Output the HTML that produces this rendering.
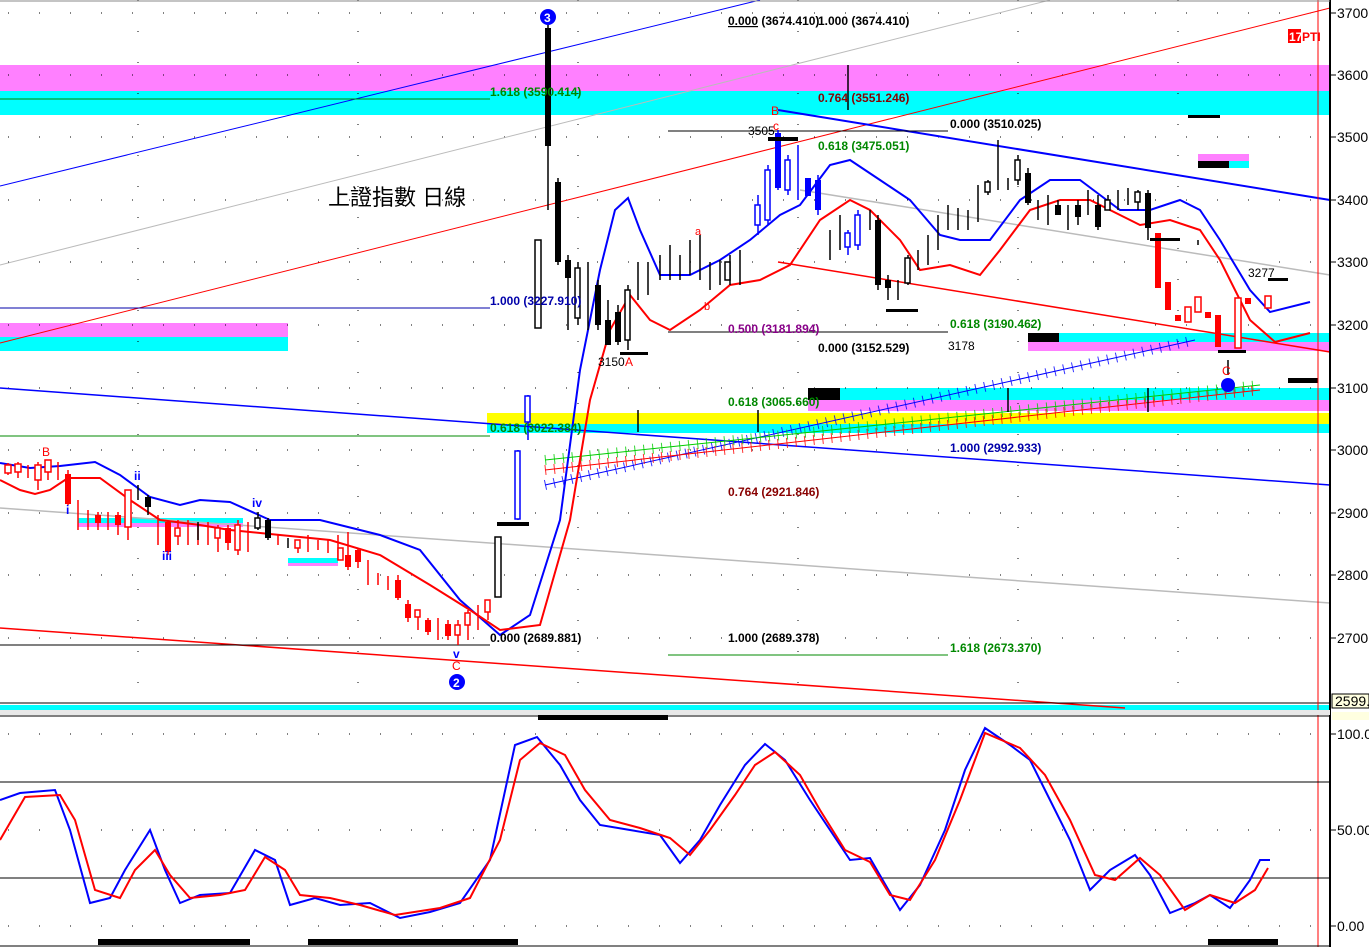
<!DOCTYPE html>
<html><head><meta charset="utf-8"><style>
html,body{margin:0;padding:0;background:#fff;width:1369px;height:947px;overflow:hidden}
svg{display:block}
text{font-family:"Liberation Sans",sans-serif;font-weight:bold;font-size:12px}
.ax{font-family:"Liberation Sans",sans-serif;font-weight:normal;font-size:14px;fill:#000}
</style></head><body>
<svg width="1369" height="947" viewBox="0 0 1369 947" xmlns="http://www.w3.org/2000/svg">
<rect width="1369" height="947" fill="#fff"/>
<rect x="0" y="65" width="1330" height="26" fill="#ff80ff"/>
<rect x="0" y="91" width="1330" height="24" fill="#00ffff"/>
<rect x="0" y="323" width="288" height="14" fill="#ff80ff"/>
<rect x="0" y="337" width="288" height="14" fill="#00ffff"/>
<rect x="487" y="413" width="843" height="11" fill="#ffff00"/>
<rect x="487" y="424" width="843" height="9" fill="#00ffff"/>
<rect x="808" y="388" width="522" height="12" fill="#00ffff"/>
<rect x="808" y="400" width="522" height="11" fill="#ff80ff"/>
<rect x="808" y="388" width="32" height="12" fill="#000"/>
<rect x="1028" y="333" width="302" height="9" fill="#00ffff"/>
<rect x="1028" y="342" width="302" height="9" fill="#ff80ff"/>
<rect x="1028" y="333" width="31" height="9" fill="#000"/>
<rect x="1198" y="154" width="51" height="7" fill="#ff80ff"/>
<rect x="1198" y="161" width="31" height="7" fill="#000"/>
<rect x="1229" y="161" width="20" height="7" fill="#00ffff"/>
<rect x="1288" y="378" width="30" height="5" fill="#000"/>
<rect x="0" y="705" width="1330" height="5" fill="#00ffff"/>
<rect x="78" y="518" width="165" height="5" fill="#00ffff"/><rect x="78" y="523" width="165" height="4" fill="#ff80ff"/>
<rect x="288" y="558" width="50" height="5" fill="#00ffff"/><rect x="288" y="563" width="50" height="3" fill="#ff80ff"/>
<g stroke="#000" stroke-width="1" stroke-dasharray="1 30" fill="none">
<path d="M8 13H1320M8 75H1320M8 137H1320M8 200H1320M8 262H1320M8 325H1320M8 388H1320M8 450H1320M8 513H1320M8 575H1320M8 638H1320M8 734H1320M8 830H1320M8 926H1320"/>
</g>
<g stroke="#000" stroke-dasharray="1 30"><path d="M138 0V700M358 0V700M578 0V700M798 0V700M1018 0V700M1178 0V700"/></g>
<g fill="none">
<path d="M0 186L760 0" stroke="#00f"/>
<path d="M0 265L1050 0" stroke="#bbb"/>
<path d="M0 343L1330 8" stroke="#f00"/>
<path d="M0 388L1330 485" stroke="#00f" stroke-width="1.5"/>
<path d="M778 110L1330 200" stroke="#00f" stroke-width="2"/>
<path d="M778 262L1330 352" stroke="#f00" stroke-width="1.5"/>
<path d="M800 190L1330 275" stroke="#bbb" stroke-width="1.5"/>
<path d="M0 508L1330 603" stroke="#bbb" stroke-width="1.5"/>
<path d="M0 628L1125 708" stroke="#f00" stroke-width="1.5"/>
<path d="M0 645H490" stroke="#000"/>
<path d="M0 308H490" stroke="#00a"/>
<path d="M0 436H490" stroke="#080"/>
<path d="M0 99H490" stroke="#080"/>
<path d="M668 131H948" stroke="#000"/>
<path d="M668 332H948" stroke="#000"/>
<path d="M668 655H948" stroke="#080"/>
<path d="M0 703H1330" stroke="#000"/>
<path d="M1318 0V947" stroke="#f00"/>
<path d="M1330 0V947" stroke="#000" stroke-width="2"/>
</g>
<g fill="none" stroke-width="1">
<path d="M545 485L1195 340" stroke="#00f"/><path d="M545 485L1195 340" stroke="#00f" stroke-width="10" stroke-dasharray="1 8" opacity=".8"/>
<path d="M545 460L1260 385" stroke="#0c0"/><path d="M545 460L1260 385" stroke="#0c0" stroke-width="10" stroke-dasharray="1 8" opacity=".8"/>
<path d="M545 470L1260 390" stroke="#f00"/><path d="M545 470L1260 390" stroke="#f00" stroke-width="10" stroke-dasharray="1 8" opacity=".8"/>
</g>
<polyline fill="none" stroke="#00f" stroke-width="2" points="0,463 30,468 60,466 95,462 120,475 150,497 180,505 200,500 230,502 270,520 320,520 380,535 420,550 460,600 500,635 530,615 560,520 580,370 600,270 615,210 628,198 640,230 660,275 690,275 720,260 750,240 780,215 800,205 830,165 850,160 880,180 910,200 940,235 960,240 990,240 1020,200 1050,180 1080,180 1100,195 1120,210 1150,210 1180,200 1200,210 1220,240 1250,290 1270,312 1310,302"/>
<polyline fill="none" stroke="#f00" stroke-width="2" points="0,480 20,490 35,494 50,490 68,478 100,478 130,500 160,520 200,525 230,530 280,535 330,540 380,555 430,585 470,610 500,630 540,625 570,520 590,400 610,330 630,295 650,320 670,330 700,310 730,285 760,280 790,265 820,220 850,200 870,210 900,240 920,270 950,265 980,275 1000,250 1030,210 1060,200 1090,200 1110,210 1140,225 1170,220 1200,230 1220,260 1250,320 1275,342 1310,333"/>
<g stroke-width="1.5">
<g stroke="#f00" fill="#f00">
<path d="M8 463V475M18 462V478M28 465V478M38 462V490M48 460V480M58 462V480M68 470V505M78 500V530M88 510V530M98 512V530M108 512V530M118 512V535M128 495V540M158 515V545M168 520V555M178 520V545M188 520V545M198 525V545M208 522V545M218 525V552M228 525V550M238 520V555M248 522V552M278 535V545M298 540V553M308 535V552M318 540V550M328 540V553M338 535V560M348 532V570M358 548V568M368 560V585M378 573V585M388 576V590M398 575V600M408 600V622M418 610V630M428 618V635M438 618V640M448 620V640M458 620V645M468 610V640M478 605V630M488 600V620"/>
</g>
<g fill="#f00" stroke="none">
<rect x="65" y="474" width="6" height="30"/><rect x="95" y="515" width="6" height="8"/><rect x="115" y="515" width="6" height="10"/><rect x="165" y="522" width="6" height="30"/><rect x="225" y="528" width="6" height="15"/><rect x="345" y="555" width="6" height="12"/><rect x="355" y="550" width="6" height="12"/><rect x="395" y="580" width="6" height="18"/><rect x="405" y="604" width="6" height="14"/><rect x="425" y="620" width="6" height="12"/><rect x="445" y="624" width="6" height="12"/><rect x="1155" y="233" width="6" height="55"/><rect x="1165" y="282" width="6" height="28"/><rect x="1215" y="315" width="6" height="32"/><rect x="1245" y="298" width="6" height="6"/><rect x="1175" y="315" width="6" height="6"/><rect x="1205" y="312" width="6" height="6"/></g>
<g fill="#fff" stroke="#f00">
<rect x="5" y="465" width="6" height="8"/><rect x="15" y="464" width="6" height="8"/><rect x="35" y="465" width="6" height="15"/><rect x="45" y="460" width="6" height="12"/><rect x="125" y="490" width="6" height="37"/><rect x="175" y="528" width="5" height="8"/><rect x="215" y="528" width="5" height="10"/><rect x="235" y="525" width="5" height="25"/><rect x="295" y="540" width="5" height="8"/><rect x="338" y="548" width="5" height="12"/><rect x="415" y="610" width="5" height="7"/><rect x="455" y="625" width="5" height="10"/><rect x="465" y="613" width="5" height="12"/><rect x="485" y="600" width="5" height="12"/><rect x="1185" y="307" width="6" height="15"/><rect x="1195" y="297" width="6" height="15"/><rect x="1235" y="298" width="6" height="50"/><rect x="1265" y="296" width="6" height="12"/></g>
<g stroke="#000" fill="#000">
<path d="M138 485V500M148 495V515M198 522V540M258 512V530M268 518V540M288 538V548M548 20V210M558 178V265M568 255V330M578 262V325M588 262V330M598 280V330M608 300V345M618 305V345M628 285V350M638 262V300M648 262V295M660 255V280M670 245V280M680 255V280M690 240V275M700 235V280M710 262V290M720 260V285M730 255V285M740 250V285M830 230V260M840 215V250M870 210V230M878 215V290M888 275V300M898 280V300M908 255V285M918 250V270M928 235V265M938 215V250M948 205V230M958 208V230M968 210V230M978 185V222M988 180V195M998 140V190M1008 178V190M1018 155V185M1028 168V205M1038 200V220M1048 195V225M1058 200V215M1068 205V230M1078 200V225M1088 190V215M1098 195V230M1108 195V210M1118 190V210M1128 188V205M1138 190V210M1148 190V240M1198 240V245M1228 360V375M1008 388V412M638 410V432M758 410V432M1148 388V412M848 65V110"/></g>
<g fill="#000" stroke="none"><rect x="545" y="28" width="6" height="118"/><rect x="555" y="182" width="6" height="80"/><rect x="565" y="260" width="6" height="18"/><rect x="595" y="285" width="6" height="40"/><rect x="605" y="320" width="6" height="25"/><rect x="615" y="312" width="6" height="30"/><rect x="875" y="220" width="6" height="65"/><rect x="885" y="280" width="6" height="8"/><rect x="1145" y="193" width="6" height="35"/><rect x="1025" y="173" width="6" height="30"/><rect x="145" y="497" width="6" height="10"/><rect x="265" y="520" width="6" height="18"/><rect x="1055" y="205" width="6" height="10"/><rect x="1075" y="205" width="6" height="12"/><rect x="1095" y="205" width="6" height="22"/></g>
<g fill="#fff" stroke="#000"><rect x="535" y="240" width="6" height="88"/><rect x="575" y="268" width="5" height="50"/><rect x="625" y="290" width="5" height="50"/><rect x="255" y="518" width="5" height="10"/><rect x="985" y="182" width="5" height="10"/><rect x="1015" y="160" width="5" height="20"/><rect x="495" y="537" width="6" height="60"/><rect x="905" y="258" width="5" height="25"/><rect x="1105" y="200" width="5" height="10"/><rect x="1135" y="192" width="5" height="10"/><rect x="725" y="262" width="5" height="18"/></g>
<g stroke="#00f" fill="#00f"><path d="M528 395V440M518 450V520M778 130V190M818 175V215M758 195V235M788 155V195M798 145V200M768 165V225M848 230V255M858 210V250"/></g>
<g fill="#fff" stroke="#00f"><rect x="525" y="396" width="5" height="26"/><rect x="515" y="451" width="5" height="68"/><rect x="765" y="170" width="5" height="50"/><rect x="785" y="160" width="5" height="30"/><rect x="845" y="233" width="5" height="14"/><rect x="855" y="215" width="5" height="30"/><rect x="755" y="205" width="5" height="20"/></g>
<g fill="#00f" stroke="none"><rect x="775" y="133" width="6" height="55"/><rect x="815" y="180" width="6" height="30"/><rect x="805" y="178" width="6" height="18"/></g>
</g>
<g fill="#000"><rect x="497" y="522" width="32" height="4"/><rect x="886" y="309" width="32" height="3"/><rect x="1218" y="350" width="28" height="3"/><rect x="1268" y="278" width="20" height="3"/><rect x="768" y="137" width="30" height="4"/><rect x="1150" y="238" width="30" height="3"/><rect x="1188" y="115" width="32" height="3"/><rect x="620" y="352" width="28" height="3"/><rect x="538" y="714" width="130" height="6"/><rect x="98" y="939" width="152" height="6"/><rect x="308" y="939" width="210" height="6"/><rect x="1208" y="939" width="70" height="6"/></g>
<g>
<text x="728" y="25" fill="#000"><tspan text-decoration="underline">0.000</tspan> (3674.410)</text>
<text x="818" y="25" fill="#000">1.000 (3674.410)</text>
<text x="490" y="96" fill="#080">1.618 (3590.414)</text>
<text x="818" y="102" fill="#800">0.764 (3551.246)</text>
<text x="818" y="150" fill="#080">0.618 (3475.051)</text>
<text x="950" y="128" fill="#000">0.000 (3510.025)</text>
<text x="748" y="135" fill="#000" style="font-weight:normal">3505</text>
<text x="490" y="305" fill="#00a">1.000 (3227.910)</text>
<text x="728" y="333" fill="#808">0.500 (3181.894)</text>
<text x="950" y="328" fill="#080">0.618 (3190.462)</text>
<text x="818" y="352" fill="#000">0.000 (3152.529)</text>
<text x="948" y="350" fill="#000" style="font-weight:normal">3178</text>
<text x="598" y="366" fill="#000" style="font-weight:normal">3150</text>
<text x="625" y="366" fill="#f00" style="font-weight:normal">A</text>
<text x="728" y="406" fill="#080">0.618 (3065.660)</text>
<text x="490" y="432" fill="#080">0.618 (3022.384)</text>
<text x="950" y="452" fill="#00a">1.000 (2992.933)</text>
<text x="728" y="496" fill="#800">0.764 (2921.846)</text>
<text x="490" y="642" fill="#000">0.000 (2689.881)</text>
<text x="728" y="642" fill="#000">1.000 (2689.378)</text>
<text x="950" y="652" fill="#080">1.618 (2673.370)</text>
<text x="1248" y="277" fill="#000" style="font-weight:normal">3277</text>
<text x="771" y="115" fill="#f00" style="font-weight:normal">B</text>
<text x="773" y="130" fill="#f00" style="font-weight:normal">c</text>
<text x="695" y="235" fill="#f00" style="font-weight:normal;font-size:11px">a</text>
<text x="704" y="310" fill="#f00" style="font-weight:normal;font-size:11px">b</text>
<text x="1222" y="375" fill="#f00" style="font-weight:normal">C</text>
<text x="42" y="456" fill="#f00" style="font-weight:normal">B</text>
<text x="134" y="480" fill="#00f">ii</text>
<text x="66" y="514" fill="#00f">i</text>
<text x="162" y="560" fill="#00f">iii</text>
<text x="252" y="507" fill="#00f">iv</text>
<text x="453" y="658" fill="#00f">v</text>
<text x="452" y="670" fill="#f00" style="font-weight:normal">C</text>
<text x="328" y="205" fill="#000" style="font-family:'Liberation Sans','Noto Sans CJK TC',sans-serif;font-weight:normal;font-size:22px">上證指數 日線</text>
</g>
<circle cx="548" cy="17" r="8" fill="#00f"/><text x="544" y="22" fill="#fff">3</text>
<circle cx="457" cy="682" r="8" fill="#00f"/><text x="453" y="687" fill="#fff">2</text>
<circle cx="1228" cy="385" r="7" fill="#00f"/>
<rect x="1288" y="29" width="13" height="14" fill="#f00"/><text x="1289" y="41" fill="#fff">17</text><text x="1302" y="41" fill="#f00">PTI</text>
<rect x="1331" y="0" width="38" height="947" fill="#fff"/>
<g stroke="#000"><path d="M1331 13h5M1331 75h5M1331 137h5M1331 200h5M1331 262h5M1331 325h5M1331 388h5M1331 450h5M1331 513h5M1331 575h5M1331 638h5M1331 734h5M1331 830h5M1331 926h5"/></g>
<g>
<text class="ax" x="1337" y="18">3700.</text><text class="ax" x="1337" y="80">3600.</text><text class="ax" x="1337" y="142">3500.</text><text class="ax" x="1337" y="205">3400.</text><text class="ax" x="1337" y="267">3300.</text><text class="ax" x="1337" y="330">3200.</text><text class="ax" x="1337" y="393">3100.</text><text class="ax" x="1337" y="455">3000.</text><text class="ax" x="1337" y="518">2900.</text><text class="ax" x="1337" y="580">2800.</text><text class="ax" x="1337" y="643">2700.</text>
<text class="ax" x="1337" y="739">100.0</text><text class="ax" x="1337" y="835">50.00</text><text class="ax" x="1337" y="931">0.00</text>
</g>
<rect x="1332" y="694" width="37" height="14" fill="#ffffe0" stroke="#000"/><text class="ax" x="1335" y="706">2599.</text>
<rect x="1332" y="712" width="37" height="8" fill="#ffffe0"/>
<rect x="0" y="710" width="1330" height="5" fill="#e8e8e8"/>
<path d="M0 716H1330" stroke="#000"/>
<path d="M0 782H1330M0 878H1330" stroke="#000"/>
<polyline fill="none" stroke="#00f" stroke-width="2" points="0,800 20,793 55,790 70,830 90,903 110,898 125,870 150,830 165,870 180,903 200,895 230,893 255,850 275,860 290,905 315,898 340,905 370,903 400,918 430,912 460,903 490,860 515,745 537,737 560,765 580,800 600,825 630,830 660,835 680,863 700,840 720,805 745,765 765,744 785,760 810,800 830,830 850,860 870,858 900,910 920,885 945,830 965,770 985,728 1010,745 1030,760 1050,800 1070,840 1090,890 1110,870 1135,855 1150,875 1170,913 1195,903 1210,895 1230,908 1250,880 1260,860 1270,860"/>
<polyline fill="none" stroke="#f00" stroke-width="2" points="0,840 25,797 60,795 75,820 95,890 120,898 135,870 155,850 170,875 190,898 220,895 245,890 265,857 285,870 300,895 330,898 360,905 395,915 440,908 470,898 500,840 520,760 540,743 565,755 585,790 610,820 640,828 670,838 690,855 710,830 735,795 755,765 775,752 800,775 820,810 845,850 870,862 890,895 910,900 935,860 960,800 985,733 1020,748 1045,775 1070,820 1095,875 1115,880 1140,858 1160,875 1185,910 1210,895 1235,903 1255,890 1268,868"/>
<path d="M0 1H1330" stroke="#888"/>
<path d="M0 946H1330" stroke="#000"/>
</svg>
</body></html>
